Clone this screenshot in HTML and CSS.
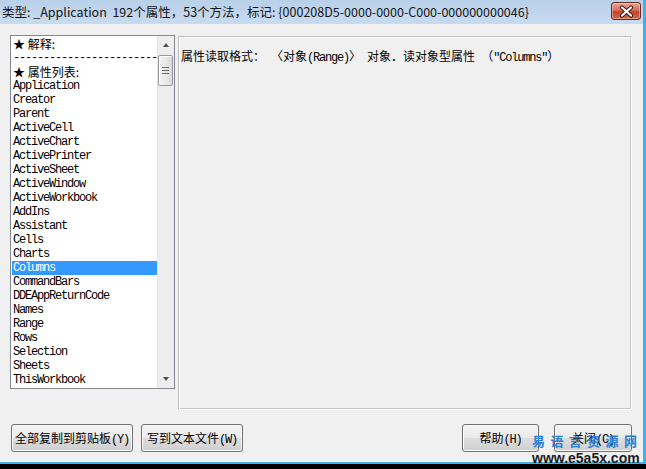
FILE: index.html
```html
<!DOCTYPE html>
<html>
<head>
<meta charset="utf-8">
<link rel="stylesheet" href="styles.css">
</head>
<body>
<div class="window">
  <div class="titlebar">
    <span class="title">类型: _Application  192个属性，53个方法，标记: {000208D5-0000-0000-C000-000000000046}</span>
    <div class="close">
      <svg width="29" height="17" viewBox="0 0 29 17">
        <path d="M10 4.5 L19 12.5 M19 4.5 L10 12.5" stroke="#4a1a12" stroke-width="4.2" stroke-linecap="round" fill="none"/>
        <path d="M10 4.5 L19 12.5 M19 4.5 L10 12.5" stroke="#ffffff" stroke-width="2.2" stroke-linecap="round" fill="none"/>
      </svg>
    </div>
  </div>
  <div class="main">
    <div class="content">
      <div class="listbox">
        <div class="items">
          <div class="item cjrow">★ 解释:</div>
          <div class="item">------------------------</div>
          <div class="item cjrow">★ 属性列表:</div>
          <div class="item">Application</div>
          <div class="item">Creator</div>
          <div class="item">Parent</div>
          <div class="item">ActiveCell</div>
          <div class="item">ActiveChart</div>
          <div class="item">ActivePrinter</div>
          <div class="item">ActiveSheet</div>
          <div class="item">ActiveWindow</div>
          <div class="item">ActiveWorkbook</div>
          <div class="item">AddIns</div>
          <div class="item">Assistant</div>
          <div class="item">Cells</div>
          <div class="item">Charts</div>
          <div class="item selected">Columns</div>
          <div class="item">CommandBars</div>
          <div class="item">DDEAppReturnCode</div>
          <div class="item">Names</div>
          <div class="item">Range</div>
          <div class="item">Rows</div>
          <div class="item">Selection</div>
          <div class="item">Sheets</div>
          <div class="item">ThisWorkbook</div>
        </div>
        <div class="scrollbar">
          <div class="sb-btn"><span class="tri up"></span></div>
          <div class="thumb"><span class="grip"></span></div>
          <div class="track"></div>
          <div class="sb-btn"><span class="tri down"></span></div>
        </div>
      </div>
      <div class="panel">
        <p class="desc"><span class="cj">属性读取格式：</span><span class="h"> </span><span class="cj">〈对象</span><span class="h">(Range)</span><span class="cj">〉</span><span class="h"> </span><span class="cj">对象．读对象型属性</span><span class="h"> </span><span class="cj">（</span><span class="h">"Columns"</span><span class="cj">）</span></p>
      </div>
    </div>
    <div class="buttons">
      <div class="group left">
        <button class="btn b1">全部复制到剪贴板<span class="h">(Y)</span></button>
        <button class="btn b2">写到文本文件<span class="h">(W)</span></button>
      </div>
      <div class="group right">
        <button class="btn b3">帮助<span class="h">(H)</span></button>
        <button class="btn b4">关闭<span class="h">(C)</span></button>
      </div>
    </div>
  </div>
  <div class="watermark">
    <div class="wm-cn">易语言资源网</div>
    <div class="wm-url">www.e5a5x.com</div>
  </div>
</div>
</body>
</html>
```

FILE: styles.css
```css
html, body {
  margin: 0;
  padding: 0;
}
body {
  background: #000;
  width: 646px;
  height: 469px;
  overflow: hidden;
}
.window {
  position: relative;
  width: 643px;
  height: 462px;
  background: #f0f0f0;
  border-right: 3px solid #3cb3e6;
  border-bottom: 2px solid #3cb3e6;
  display: flex;
  flex-direction: column;
}
.titlebar {
  height: 24px;
  flex: none;
  background: linear-gradient(#b9d0ea, #c8dbf0);
  display: flex;
  align-items: center;
  justify-content: space-between;
  padding-left: 2px;
}
.title {
  font-family: "Noto Sans CJK SC", sans-serif;
  font-size: 12.5px;
  color: #141414;
  white-space: pre;
  line-height: 16px;
}
.close {
  width: 30px;
  height: 18px;
  margin-right: 2px;
  margin-top: -2px;
  border: 1px solid #6a2a20;
  border-radius: 3px;
  box-sizing: border-box;
  background: linear-gradient(#e6a797 0%, #d66f59 45%, #c4432b 55%, #cf6a4f 100%);
  box-shadow: inset 0 0 0 1px rgba(255, 220, 210, 0.45);
  overflow: hidden;
}
.close svg {
  display: block;
}
.main {
  flex: 1;
  padding: 11px 10px 0 10px;
  display: flex;
  flex-direction: column;
}
.content {
  display: flex;
  gap: 3px;
  align-items: flex-start;
}
.listbox {
  width: 163px;
  height: 352px;
  border: 1px solid #828790;
  background: #fff;
  display: flex;
}
.items {
  width: 146px;
  padding-top: 1px;
  overflow: hidden;
}
.item {
  box-sizing: border-box;
  width: 145px;
  height: 14px;
  margin-left: 1px;
  padding-left: 1px;
  line-height: 14px;
  white-space: pre;
  overflow: hidden;
  font-family: "Liberation Mono", monospace;
  font-size: 12px;
  letter-spacing: -1.2px;
  color: #000;
}
.item.cjrow {
  font-family: "Noto Sans CJK SC", sans-serif;
  letter-spacing: 0;
  overflow: visible;
}
.item.selected {
  background: #3399ff;
  color: #fff;
}
.scrollbar {
  width: 17px;
  background: #ededed;
  border-left: 1px solid #e4e4e4;
  box-sizing: border-box;
  display: flex;
  flex-direction: column;
}
.sb-btn {
  height: 18px;
  flex: none;
  display: flex;
  align-items: center;
  justify-content: center;
}
.tri {
  width: 0;
  height: 0;
  border-left: 3.5px solid transparent;
  border-right: 3.5px solid transparent;
}
.tri.up {
  border-bottom: 4px solid #4f4f4f;
}
.tri.down {
  border-top: 4px solid #4f4f4f;
}
.thumb {
  flex: none;
  height: 29px;
  margin: 1px 1px 0 0;
  border: 1px solid #979797;
  border-radius: 2px;
  background: linear-gradient(90deg, #f3f3f3, #e6e6e6 60%, #d9d9d9);
  box-shadow: inset 1px 1px #fff;
  display: flex;
  align-items: center;
  justify-content: center;
}
.grip {
  width: 7px;
  height: 5px;
  border-top: 1px solid #6a6a6a;
  border-bottom: 1px solid #6a6a6a;
}
.grip::after {
  content: "";
  display: block;
  height: 1px;
  margin-top: 2px;
  background: #6a6a6a;
}
.track {
  flex: 1;
}
.panel {
  margin-top: 1px;
  width: 452px;
  height: 372px;
  border: 1px solid;
  border-color: #bcbcbc #fff #fff #bcbcbc;
  box-shadow: inset 1px 1px #fff, inset -1px -1px #c6c6c6;
}
.desc {
  margin: 0;
  padding: 12px 0 0 2px;
  line-height: 14px;
  font-size: 12px;
  white-space: pre;
  color: #000;
}
.cj {
  font-family: "Noto Sans CJK SC", sans-serif;
}
.h {
  font-family: "Liberation Mono", monospace;
  letter-spacing: -1.2px;
}
.buttons {
  margin-top: 14px;
  display: flex;
  justify-content: space-between;
}
.group {
  display: flex;
}
.group.left {
  margin-left: 1px;
  gap: 8px;
}
.group.right {
  margin-right: 1px;
  gap: 15px;
}
.btn {
  height: 28px;
  padding: 0;
  border: 1px solid #707070;
  border-radius: 3px;
  background: linear-gradient(#f2f2f2 0%, #ebebeb 50%, #dddddd 51%, #cfcfcf 100%);
  box-shadow: inset 0 0 0 1px #fbfbfb;
  font-family: "Noto Sans CJK SC", sans-serif;
  font-size: 12px;
  color: #000;
  white-space: pre;
}
.b1 { width: 122px; }
.b2 { width: 102px; }
.b3 { width: 77px; }
.b4 { width: 78px; }
.watermark {
  position: absolute;
  left: 532px;
  top: 432px;
}
.wm-cn {
  font-family: "Noto Sans CJK SC", sans-serif;
  font-weight: bold;
  font-size: 13px;
  letter-spacing: 5.4px;
  line-height: 17px;
  color: #2b7fd9;
  white-space: nowrap;
}
.wm-url {
  margin-top: 2px;
  font-family: "Liberation Sans", sans-serif;
  font-weight: bold;
  font-size: 14px;
  line-height: 14px;
  color: #1c1c1c;
  white-space: nowrap;
}
```
